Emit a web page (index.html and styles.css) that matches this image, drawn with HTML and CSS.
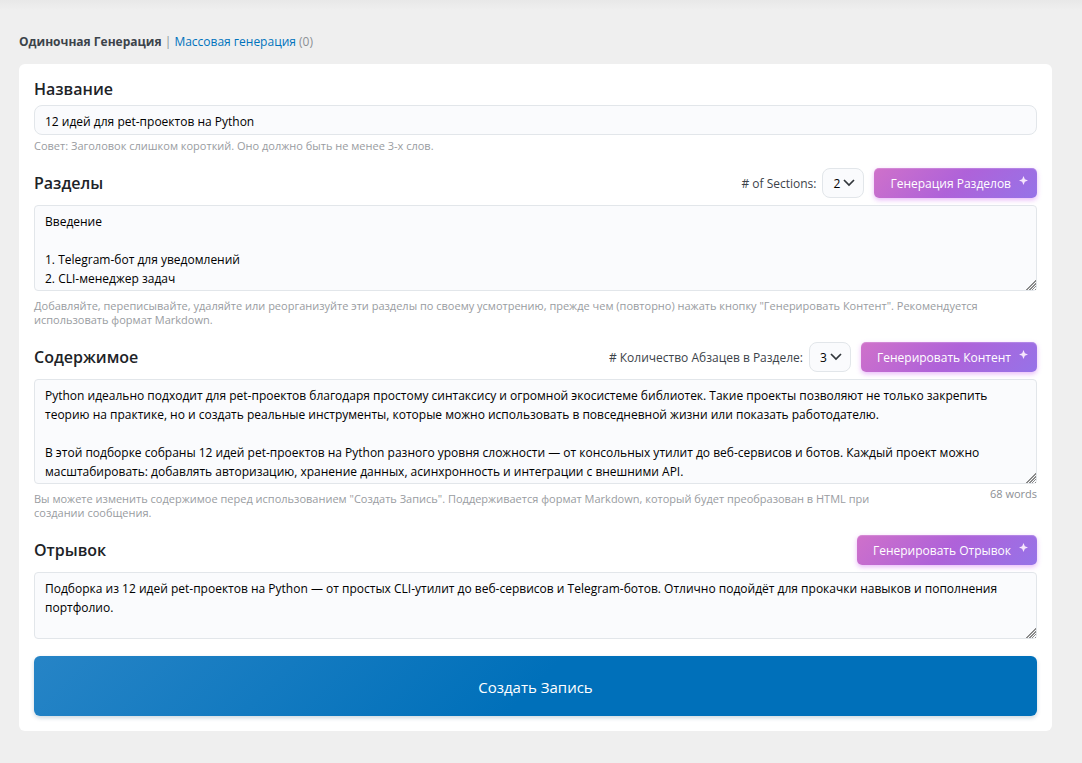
FILE: index.html
```html
<!DOCTYPE html>
<html lang="ru">
<head>
    <meta charset="UTF-8">
    <meta name="viewport" content="width=device-width, initial-scale=1.0">
    <title>Одиночная Генерация</title>
    <link rel="stylesheet" href="styles.css">
</head>
<body>
    <nav class="tabs">
        <strong>Одиночная Генерация</strong> | <a href="#bulk">Массовая генерация</a> (0)
    </nav>

    <form class="panel">
        <section class="field">
            <label class="title" for="postTitle">Название</label>
            <input type="text" id="postTitle" class="text-input" value="12 идей для pet-проектов на Python">
            <p class="hint">Совет: Заголовок слишком короткий. Оно должно быть не менее 3-х слов.</p>
        </section>

        <section class="field">
            <div class="field-head">
                <label class="title" for="sections">Разделы</label>
                <div class="controls">
                    <label for="numSections"># of Sections:</label>
                    <span class="select-wrap">
                        <select id="numSections">
                            <option>1</option>
                            <option selected>2</option>
                            <option>3</option>
                        </select>
                        <svg class="chevron" viewBox="0 0 12 8"><path d="M1 1l5 5 5-5"/></svg>
                    </span>
                    <button type="button" class="btn-generate">Генерация Разделов
                        <svg class="spark" viewBox="0 0 10 10"><path d="M5 0L6.5 3.5 10 5 6.5 6.5 5 10 3.5 6.5 0 5 3.5 3.5Z"/></svg>
                    </button>
                </div>
            </div>
            <textarea id="sections" rows="4">Введение

1. Telegram-бот для уведомлений
2. CLI-менеджер задач</textarea>
            <p class="hint">Добавляйте, переписывайте, удаляйте или реорганизуйте эти разделы по своему усмотрению, прежде чем (повторно) нажать кнопку "Генерировать Контент". Рекомендуется использовать формат Markdown.</p>
        </section>

        <section class="field">
            <div class="field-head">
                <label class="title" for="content">Содержимое</label>
                <div class="controls">
                    <label for="numParagraphs"># Количество Абзацев в Разделе:</label>
                    <span class="select-wrap">
                        <select id="numParagraphs">
                            <option>1</option>
                            <option>2</option>
                            <option selected>3</option>
                        </select>
                        <svg class="chevron" viewBox="0 0 12 8"><path d="M1 1l5 5 5-5"/></svg>
                    </span>
                    <button type="button" class="btn-generate">Генерировать Контент
                        <svg class="spark" viewBox="0 0 10 10"><path d="M5 0L6.5 3.5 10 5 6.5 6.5 5 10 3.5 6.5 0 5 3.5 3.5Z"/></svg>
                    </button>
                </div>
            </div>
            <textarea id="content" rows="5">Python идеально подходит для pet-проектов благодаря простому синтаксису и огромной экосистеме библиотек. Такие проекты позволяют не только закрепить теорию на практике, но и создать реальные инструменты, которые можно использовать в повседневной жизни или показать работодателю.

В этой подборке собраны 12 идей pet-проектов на Python разного уровня сложности — от консольных утилит до веб-сервисов и ботов. Каждый проект можно масштабировать: добавлять авторизацию, хранение данных, асинхронность и интеграции с внешними API.</textarea>
            <div class="hint-row">
                <p class="hint">Вы можете изменить содержимое перед использованием "Создать Запись". Поддерживается формат Markdown, который будет преобразован в HTML при создании сообщения.</p>
                <span class="word-count">68 words</span>
            </div>
        </section>

        <section class="field">
            <div class="field-head">
                <label class="title" for="excerpt">Отрывок</label>
                <div class="controls">
                    <button type="button" class="btn-generate">Генерировать Отрывок
                        <svg class="spark" viewBox="0 0 10 10"><path d="M5 0L6.5 3.5 10 5 6.5 6.5 5 10 3.5 6.5 0 5 3.5 3.5Z"/></svg>
                    </button>
                </div>
            </div>
            <textarea id="excerpt" rows="3">Подборка из 12 идей pet-проектов на Python — от простых CLI-утилит до веб-сервисов и Telegram-ботов. Отлично подойдёт для прокачки навыков и пополнения портфолио.</textarea>
        </section>

        <button type="submit" class="btn-create">Создать Запись</button>
    </form>
</body>
</html>
```
FILE: styles.css
```css
* {
    box-sizing: border-box;
}
body {
    margin: 0;
    padding: 33px 30px 32px 19px;
    background: linear-gradient(#e8e8e8, #efefef 10px) no-repeat #efefef;
    font-family: "Open Sans", "Noto Sans", sans-serif;
    font-size: 12px;
    color: #3c434a;
}
.tabs {
    line-height: 18px;
    color: #8c8f94;
    margin-bottom: 13px;
}
.tabs strong {
    color: #3c434a;
}
.tabs a {
    color: #0073bd;
    text-decoration: none;
}
.panel {
    background: #fff;
    border-radius: 6px;
    padding: 15px;
}
.field {
    display: flex;
    flex-direction: column;
    margin-bottom: 15px;
}
.title {
    font-size: 16px;
    font-weight: 600;
    line-height: 20px;
    color: #1d2327;
}
.text-input {
    height: 30px;
    margin-top: 6px;
    padding: 2px 10px 0;
    border: 1px solid #e2e6ea;
    border-radius: 8px;
    background: #fafbfd;
    font: inherit;
    color: #000;
}
.hint {
    margin: 8px 0 0;
    font-size: 11px;
    line-height: 14px;
    color: #999ca1;
}
.text-input + .hint {
    margin-top: 4px;
}
.field-head {
    display: flex;
    justify-content: space-between;
    align-items: center;
    margin-bottom: 7px;
}
.controls {
    display: flex;
    align-items: center;
    gap: 6px;
}
.select-wrap {
    position: relative;
}
.select-wrap select {
    display: block;
    appearance: none;
    width: 42px;
    height: 30px;
    padding: 0 10px;
    border: 1px solid #e2e6ea;
    border-radius: 8px;
    background: #fafbfd;
    font: inherit;
    color: #000;
}
.chevron {
    position: absolute;
    top: 11px;
    right: 9px;
    width: 12px;
    height: 8px;
    fill: none;
    stroke: #32373c;
    stroke-width: 1.7;
    pointer-events: none;
}
.btn-generate {
    position: relative;
    height: 30px;
    margin-left: 4px;
    padding: 1px 26px 0 16px;
    border: 0;
    border-radius: 5px;
    background: linear-gradient(135deg, #cf71ca, #af62d9 50%, #9673e8);
    box-shadow: 0 2px 5px rgba(200, 80, 240, 0.4), inset 0 1px 1px rgba(255, 255, 255, 0.2);
    font: inherit;
    color: #fff;
    cursor: pointer;
}
.spark {
    position: absolute;
    top: 8px;
    right: 9px;
    width: 9px;
    height: 9px;
    fill: #f6e6fc;
}
textarea {
    display: block;
    width: 100%;
    padding: 6px 10px 2px;
    border: 1px solid #e2e6ea;
    border-radius: 4px;
    background: #fafbfd;
    font: inherit;
    line-height: 19px;
    color: #000;
    overflow: hidden;
    resize: vertical;
}
/* diagonal grip in the lower right half of the corner */
textarea::-webkit-resizer {
    background:
        linear-gradient(135deg, #fafbfd 62%, transparent 62%),
        repeating-linear-gradient(135deg, #8a8a8a 0 1px, #fafbfd 1px 2px);
}
.hint-row {
    display: flex;
    justify-content: space-between;
    gap: 80px;
}
.word-count {
    margin-top: 3px;
    font-size: 11px;
    line-height: 14px;
    color: #8c8f94;
    white-space: nowrap;
}
.btn-create {
    display: block;
    width: 100%;
    height: 60px;
    margin-top: 17px;
    padding: 2px 0 0;
    border: 0;
    border-radius: 6px;
    background: linear-gradient(135deg, #2684c6, #0070ba 50%);
    box-shadow: 0 2px 4px rgba(0, 60, 100, 0.2);
    font: inherit;
    font-size: 15px;
    color: #fff;
    cursor: pointer;
}
```
